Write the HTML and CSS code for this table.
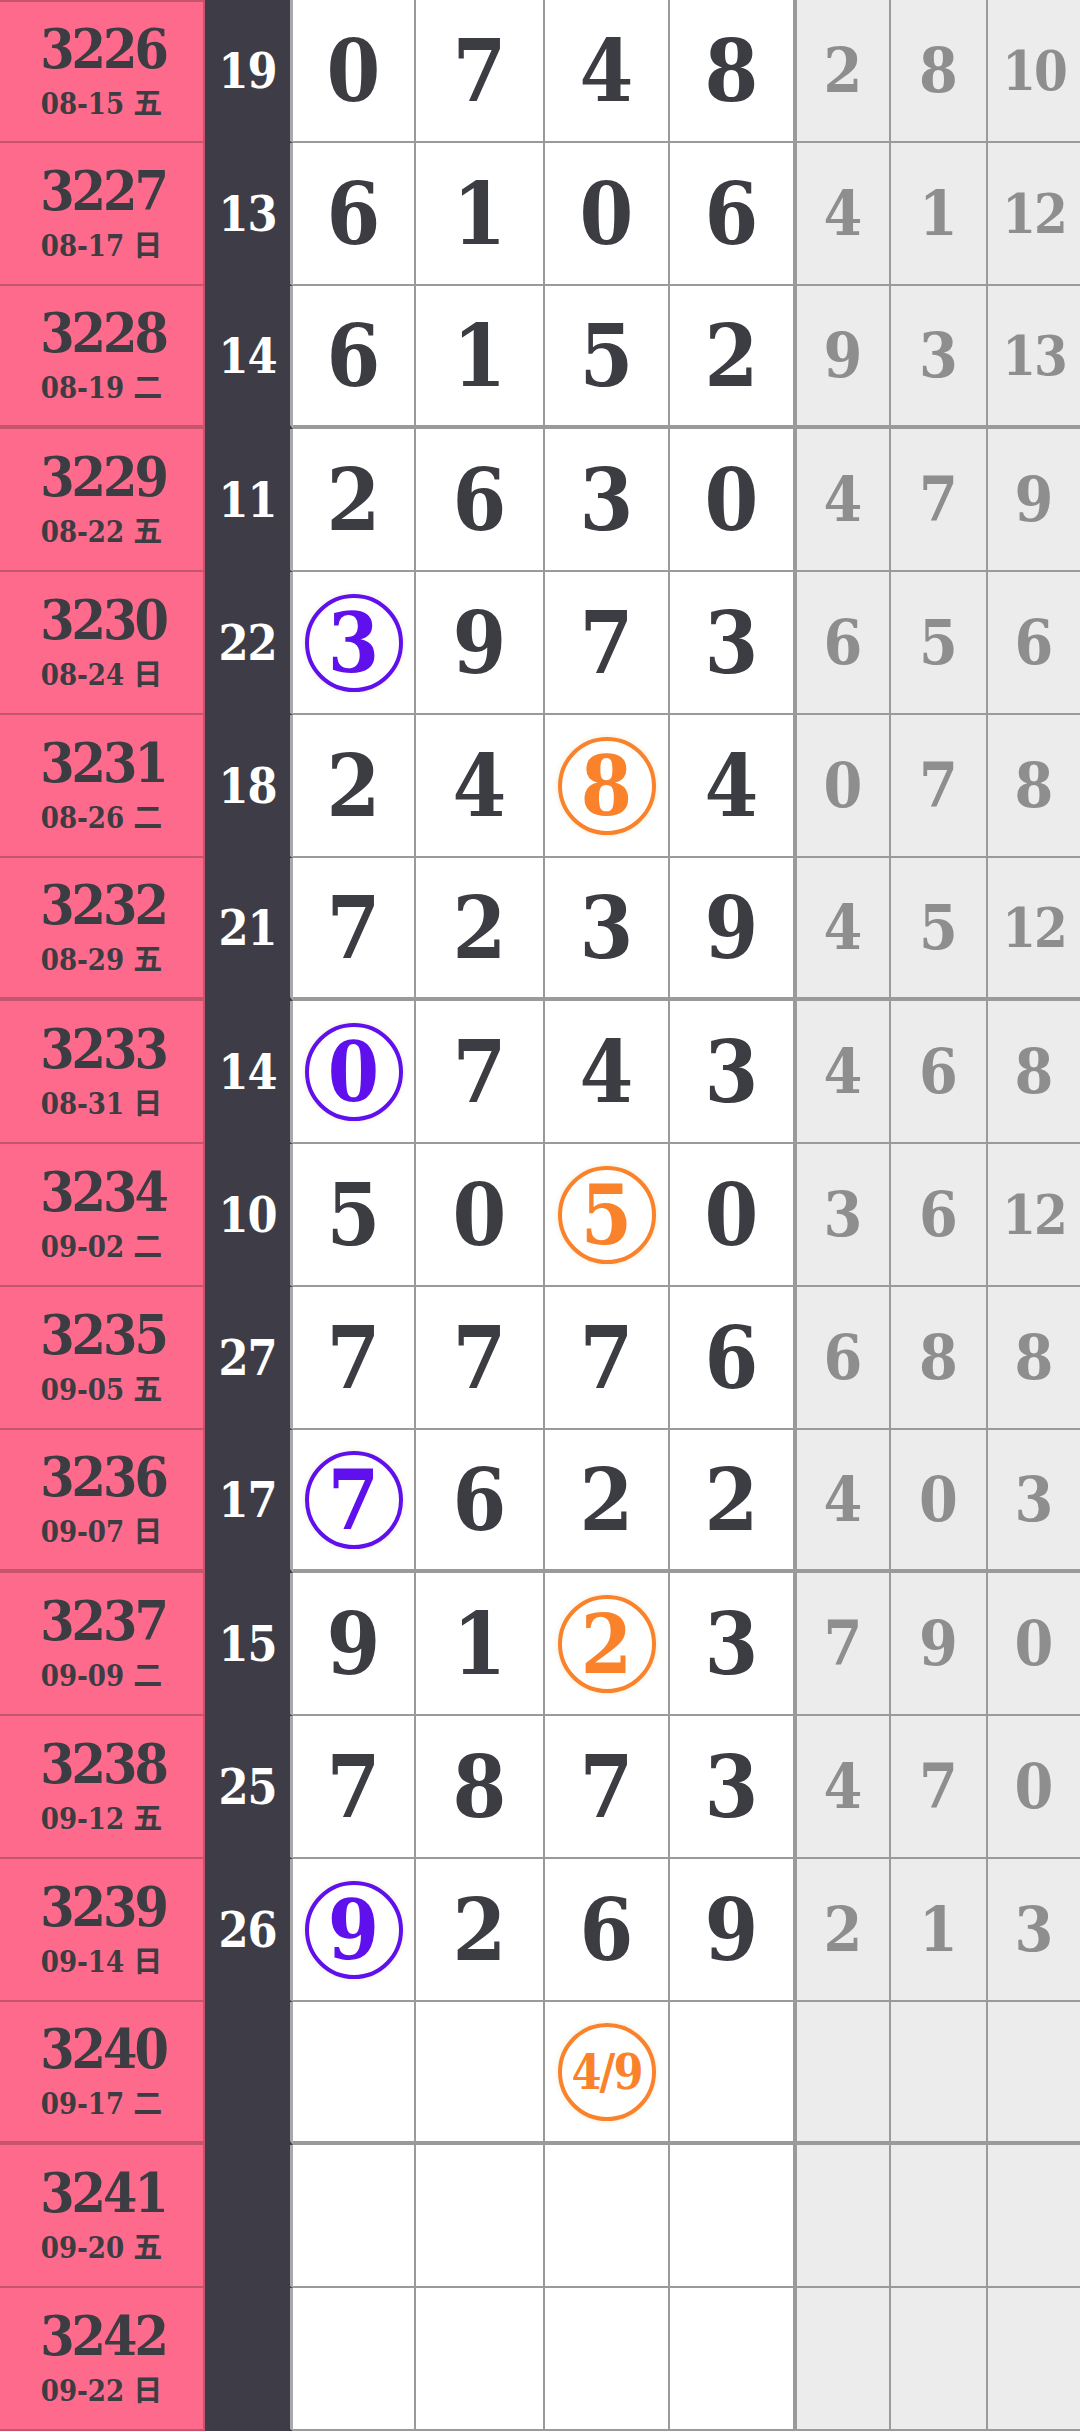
FILE: index.html
```html
<!DOCTYPE html>
<html>
  <head>
    <meta charset="UTF-8">
    <title>3D 走势</title>
    <link rel="stylesheet" href="styles.css">
  </head>
  <body>
    <div class="chart">
      <div class="row first">
        <div class="issue"><b>3226</b><span>08-15 五</span></div>
        <div class="sum">19</div>
        <div class="num">0</div><div class="num">7</div><div class="num">4</div><div class="num last">8</div>
        <div class="gap">2</div><div class="gap">8</div><div class="gap two">10</div>
      </div>
      <div class="row">
        <div class="issue"><b>3227</b><span>08-17 日</span></div>
        <div class="sum">13</div>
        <div class="num">6</div><div class="num">1</div><div class="num">0</div><div class="num last">6</div>
        <div class="gap">4</div><div class="gap">1</div><div class="gap two">12</div>
      </div>
      <div class="row end">
        <div class="issue"><b>3228</b><span>08-19 二</span></div>
        <div class="sum">14</div>
        <div class="num">6</div><div class="num">1</div><div class="num">5</div><div class="num last">2</div>
        <div class="gap">9</div><div class="gap">3</div><div class="gap two">13</div>
      </div>
      <div class="row">
        <div class="issue"><b>3229</b><span>08-22 五</span></div>
        <div class="sum">11</div>
        <div class="num">2</div><div class="num">6</div><div class="num">3</div><div class="num last">0</div>
        <div class="gap">4</div><div class="gap">7</div><div class="gap">9</div>
      </div>
      <div class="row">
        <div class="issue"><b>3230</b><span>08-24 日</span></div>
        <div class="sum">22</div>
        <div class="num"><i class="ball purple">3</i></div><div class="num">9</div><div class="num">7</div><div class="num last">3</div>
        <div class="gap">6</div><div class="gap">5</div><div class="gap">6</div>
      </div>
      <div class="row">
        <div class="issue"><b>3231</b><span>08-26 二</span></div>
        <div class="sum">18</div>
        <div class="num">2</div><div class="num">4</div><div class="num"><i class="ball orange">8</i></div><div class="num last">4</div>
        <div class="gap">0</div><div class="gap">7</div><div class="gap">8</div>
      </div>
      <div class="row end">
        <div class="issue"><b>3232</b><span>08-29 五</span></div>
        <div class="sum">21</div>
        <div class="num">7</div><div class="num">2</div><div class="num">3</div><div class="num last">9</div>
        <div class="gap">4</div><div class="gap">5</div><div class="gap two">12</div>
      </div>
      <div class="row">
        <div class="issue"><b>3233</b><span>08-31 日</span></div>
        <div class="sum">14</div>
        <div class="num"><i class="ball purple">0</i></div><div class="num">7</div><div class="num">4</div><div class="num last">3</div>
        <div class="gap">4</div><div class="gap">6</div><div class="gap">8</div>
      </div>
      <div class="row">
        <div class="issue"><b>3234</b><span>09-02 二</span></div>
        <div class="sum">10</div>
        <div class="num">5</div><div class="num">0</div><div class="num"><i class="ball orange">5</i></div><div class="num last">0</div>
        <div class="gap">3</div><div class="gap">6</div><div class="gap two">12</div>
      </div>
      <div class="row">
        <div class="issue"><b>3235</b><span>09-05 五</span></div>
        <div class="sum">27</div>
        <div class="num">7</div><div class="num">7</div><div class="num">7</div><div class="num last">6</div>
        <div class="gap">6</div><div class="gap">8</div><div class="gap">8</div>
      </div>
      <div class="row end">
        <div class="issue"><b>3236</b><span>09-07 日</span></div>
        <div class="sum">17</div>
        <div class="num"><i class="ball purple">7</i></div><div class="num">6</div><div class="num">2</div><div class="num last">2</div>
        <div class="gap">4</div><div class="gap">0</div><div class="gap">3</div>
      </div>
      <div class="row">
        <div class="issue"><b>3237</b><span>09-09 二</span></div>
        <div class="sum">15</div>
        <div class="num">9</div><div class="num">1</div><div class="num"><i class="ball orange">2</i></div><div class="num last">3</div>
        <div class="gap">7</div><div class="gap">9</div><div class="gap">0</div>
      </div>
      <div class="row">
        <div class="issue"><b>3238</b><span>09-12 五</span></div>
        <div class="sum">25</div>
        <div class="num">7</div><div class="num">8</div><div class="num">7</div><div class="num last">3</div>
        <div class="gap">4</div><div class="gap">7</div><div class="gap">0</div>
      </div>
      <div class="row">
        <div class="issue"><b>3239</b><span>09-14 日</span></div>
        <div class="sum">26</div>
        <div class="num"><i class="ball purple">9</i></div><div class="num">2</div><div class="num">6</div><div class="num last">9</div>
        <div class="gap">2</div><div class="gap">1</div><div class="gap">3</div>
      </div>
      <div class="row end">
        <div class="issue"><b>3240</b><span>09-17 二</span></div>
        <div class="sum"></div>
        <div class="num"></div><div class="num"></div><div class="num"><i class="ball orange small">4/9</i></div><div class="num last"></div>
        <div class="gap"></div><div class="gap"></div><div class="gap"></div>
      </div>
      <div class="row">
        <div class="issue"><b>3241</b><span>09-20 五</span></div>
        <div class="sum"></div>
        <div class="num"></div><div class="num"></div><div class="num"></div><div class="num last"></div>
        <div class="gap"></div><div class="gap"></div><div class="gap"></div>
      </div>
      <div class="row">
        <div class="issue"><b>3242</b><span>09-22 日</span></div>
        <div class="sum"></div>
        <div class="num"></div><div class="num"></div><div class="num"></div><div class="num last"></div>
        <div class="gap"></div><div class="gap"></div><div class="gap"></div>
      </div>
    </div>
  </body>
</html>
```

FILE: styles.css
```css
* {
  box-sizing: border-box;
}
body {
  margin: 0;
  background-color: #FFFFFF;
  font-family: "DejaVu Serif Condensed", "DejaVu Serif", "Liberation Serif", "Noto Sans CJK SC", serif;
  font-stretch: condensed;
  font-weight: bold;
  color: #3c3c43;
}
.row {
  display: grid;
  grid-template-columns: 205px 88px 123px 129px 125px 127px 94px 97px 92px;
  height: 143px;
}
.row > div {
  display: flex;
  align-items: center;
  justify-content: center;
  border-bottom: 2px solid #9a9a9a;
}
.row.end > div {
  border-bottom-width: 4px;
}
.issue {
  flex-direction: column;
  background-color: #fd6a8c;
  border-right: 2px solid #c4556f;
  border-bottom-color: #c4556f !important;
  padding-bottom: 2px;
}
.first .issue {
  border-top: 2px solid #c4556f;
}
.issue b {
  font-size: 55px;
  line-height: 66px;
  letter-spacing: -3px;
  margin-right: -3px;
}
.issue span {
  font-size: 29px;
  line-height: 44px;
}
.sum {
  background-color: #3e3d47;
  color: #FFFFFF;
  font-size: 48px;
  letter-spacing: -1px;
  border-right: 3px solid #a9a9a9;
  border-bottom-color: #3e3d47 !important;
}
.num {
  font-size: 86px;
  border-right: 2px solid #9a9a9a;
}
.num.last {
  border-right-width: 4px;
}
.gap {
  background-color: #ececec;
  color: #8e8e8e;
  font-size: 62px;
  border-right: 2px solid #9a9a9a;
}
.gap.two {
  font-size: 54px;
  letter-spacing: -2px;
}
.gap:last-child {
  border-right: none;
}
.ball {
  display: flex;
  align-items: center;
  justify-content: center;
  width: 98px;
  height: 98px;
  border: 4px solid;
  border-radius: 50%;
  font-style: normal;
  font-size: 82px;
  box-shadow: 0 0 5px rgba(200, 190, 120, 0.35);
}
.ball.purple {
  color: #6010ec;
}
.ball.orange {
  color: #f9822a;
}
.ball.small {
  font-size: 48px;
  letter-spacing: -2px;
}
```
